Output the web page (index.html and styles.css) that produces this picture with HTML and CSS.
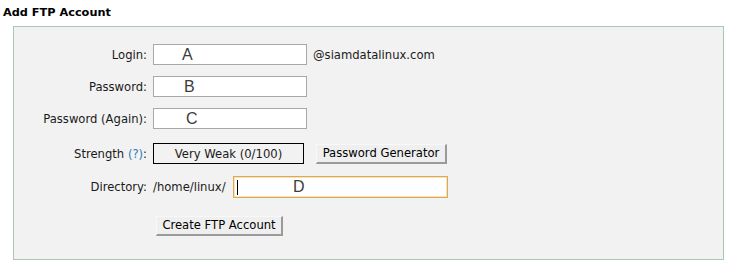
FILE: index.html
```html
<!DOCTYPE html>
<html lang="en">

<head>
    <meta charset="UTF-8">
    <title>Add FTP Account</title>
    <link rel="stylesheet" href="styles.css">
</head>

<body>
    <h3 class="title">Add FTP Account</h3>

    <div class="panel">
        <div class="row">
            <div class="label">Login:</div>
            <div class="field"><span class="val val-a">A</span></div>
            <div class="domain">@siamdatalinux.com</div>
        </div>
        <div class="row">
            <div class="label">Password:</div>
            <div class="field"><span class="val val-b">B</span></div>
        </div>
        <div class="row">
            <div class="label">Password (Again):</div>
            <div class="field"><span class="val val-c">C</span></div>
        </div>
        <div class="row row-strength">
            <div class="label">Strength <a class="help">(?)</a>:</div>
            <div class="strength">Very Weak (0/100)</div>
            <button class="btn btn-gen">Password Generator</button>
        </div>
        <div class="row row-dir">
            <div class="label">Directory:</div>
            <div class="home">/home/linux/</div>
            <div class="field field-dir"><span class="caret"></span><span class="val val-d">D</span></div>
        </div>
        <div class="row row-submit">
            <div class="label"></div>
            <button class="btn btn-create">Create FTP Account</button>
        </div>
    </div>
</body>

</html>
```

FILE: styles.css
```css
body {
    margin: 0;
    font-family: "DejaVu Sans", Verdana, sans-serif;
    font-size: 11.6px;
    color: #1a1a1a;
    background: #fff;
}

.title {
    margin: 0;
    padding: 6px 0 0 3px;
    height: 20px;
    font-size: 11.3px;
    font-weight: bold;
    color: #000;
}

.panel {
    /* grey box with the green border */
    margin-left: 13px;
    width: 709px;
    height: 215px;
    border: 1px solid #a9c7b1;
    background: #f2f2f2;
    padding-top: 17px;
}

.row {
    display: flex;
    align-items: center;
    height: 21px;
    margin-bottom: 11px;
}

.label {
    flex: 0 0 139px;
    box-sizing: border-box;
    padding-right: 6px;
    text-align: right;
}

.help {
    color: #2f7bb5;
}

.field {
    width: 154px;
    height: 21px;
    box-sizing: border-box;
    border: 1px solid #a8a8a8;
    background: #fff;
    display: flex;
    align-items: center;
}

.val {
    font-family: "Liberation Sans", Arial, sans-serif;
    font-size: 16px;
    color: #3c3c3c;
}

.val-a { padding-left: 28px; }
.val-b { padding-left: 30px; }
.val-c { padding-left: 32px; }

.domain {
    padding-left: 6px;
}

.row-strength {
    margin-top: 14px;
    margin-bottom: 12px;
}

.strength {
    width: 151px;
    height: 21px;
    box-sizing: border-box;
    border: 1px solid #000;
    display: flex;
    align-items: center;
    justify-content: center;
}

.btn {
    font-family: "DejaVu Sans", Verdana, sans-serif;
    font-size: 11.6px;
    color: #000;
    height: 20px;
    padding: 0;
    background: #efefef;
    border: 1px solid #f8f8f8;
    border-right: 2px solid #9a9a9a;
    border-bottom: 2px solid #9a9a9a;
    box-sizing: border-box;
}

.btn-gen {
    margin-left: 12px;
    width: 131px;
}

.row-dir {
    height: 22px;
    margin-bottom: 17px;
}

.home {
    flex: 0 0 80px;
}

.field-dir {
    width: 215px;
    height: 22px;
    border-color: #dfa94f;
    box-shadow: inset 0 0 0 1px #f6e2bd;
}

.caret {
    width: 1px;
    height: 15px;
    margin-left: 3px;
    background: #000;
}

.val-d { padding-left: 55px; }

.btn-create {
    margin-left: 3px;
    width: 127px;
}
```
